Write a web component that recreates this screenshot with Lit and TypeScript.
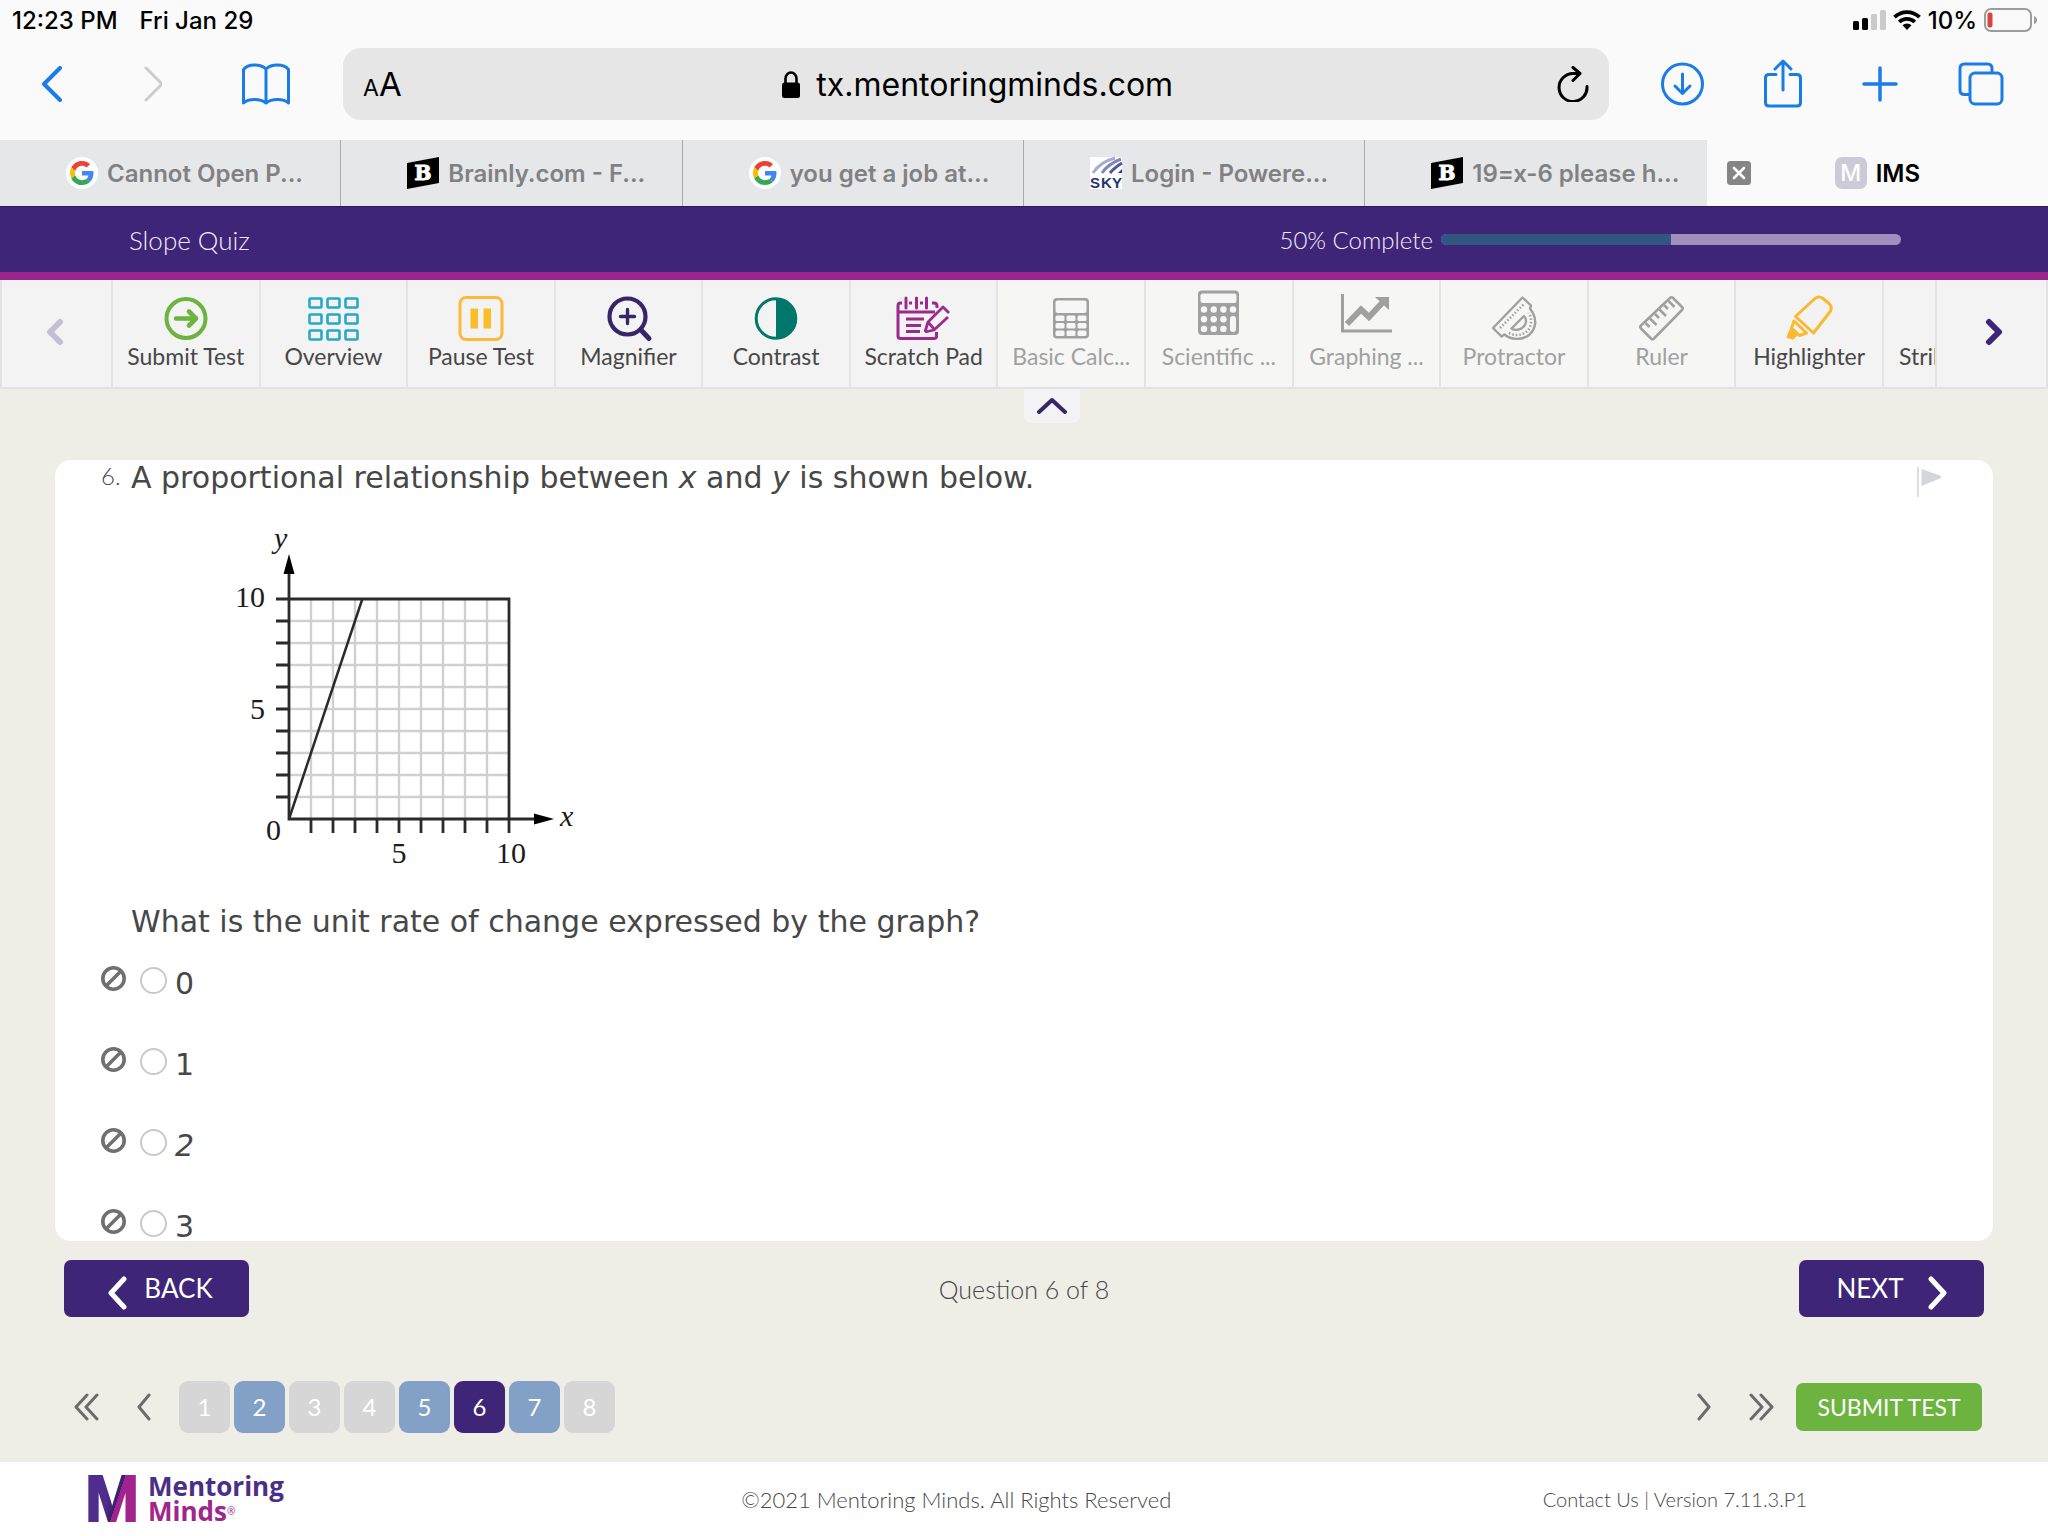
import { LitElement, html, svg, css, nothing } from "lit";
import { customElement, state } from "lit/decorators.js";
import { classMap } from "lit/directives/class-map.js";

const UNIT = 22;
const steps = Array.from({ length: 9 }, (_, i) => i + 1);

const chevron = (d: string, w: number, h: number, stroke: number) => html`<svg
  width=${w} height=${h} viewBox="0 0 ${w} ${h}" fill="none" stroke="currentColor"
  stroke-width=${stroke} stroke-linecap="round" stroke-linejoin="round" aria-hidden="true"><path d=${d}></path></svg>`;

const googleIcon = html`<svg width="32" height="32" viewBox="0 0 32 32" aria-hidden="true">
  <circle cx="16" cy="16" r="16" fill="#fff"></circle>
  <g transform="translate(4 4) scale(.5)">
    <path fill="#EA4335" d="M24 9.5c3.54 0 6.71 1.22 9.21 3.6l6.85-6.85C35.9 2.38 30.47 0 24 0 14.62 0 6.51 5.38 2.56 13.22l7.98 6.19C12.43 13.72 17.74 9.5 24 9.5z"></path>
    <path fill="#4285F4" d="M46.98 24.55c0-1.57-.15-3.09-.38-4.55H24v9.02h12.94c-.58 2.96-2.26 5.48-4.78 7.18l7.73 6c4.51-4.18 7.09-10.36 7.09-17.65z"></path>
    <path fill="#FBBC05" d="M10.53 28.59c-.48-1.45-.76-2.99-.76-4.59s.27-3.14.76-4.59l-7.98-6.19C.92 16.46 0 20.12 0 24c0 3.88.92 7.54 2.56 10.78l7.97-6.19z"></path>
    <path fill="#34A853" d="M24 48c6.48 0 11.93-2.13 15.89-5.81l-7.73-6c-2.15 1.45-4.92 2.3-8.16 2.3-6.26 0-11.57-4.22-13.47-9.91l-7.98 6.19C6.51 42.62 14.62 48 24 48z"></path>
  </g></svg>`;

const brainlyIcon = html`<svg width="32" height="32" viewBox="0 0 32 32" aria-hidden="true">
  <path d="M0 6 32 0V26L0 32z" fill="#000"></path>
  <text x="16" y="23" text-anchor="middle" font-family="DejaVu Serif, serif" font-weight="700" font-size="20" fill="#fff" stroke="#fff">B</text></svg>`;

const skyIcon = html`<svg width="32" height="32" viewBox="0 0 32 32" overflow="visible" aria-hidden="true">
  <path fill="#fff" d="M0 0h32v32H0z"></path>
  <path d="M3 16Q10 5 25 1" stroke="#a9abd0" stroke-width="3" fill="none"></path>
  <path d="M12 16Q18 7 31 2" stroke="#8287bd" stroke-width="3" fill="none"></path>
  <path d="M20 16Q24 11 32 6" stroke="#4d58a3" stroke-width="3" fill="none"></path>
  <path d="M28 16 32 12V16z" fill="#2d3a85"></path>
  <text x="0 11 22" y="31" font-family="Liberation Sans, sans-serif" font-weight="700" font-size="15" fill="#25356f">SKY</text></svg>`;

const toolSvg = (body: unknown) => html`<svg class="tool-icon" width="56" height="50" viewBox="0 0 56 50" fill="none" aria-hidden="true">${body}</svg>`;

const icons: Record<string, unknown> = {
  submit: svg`<circle cx="28" cy="28.5" r="19.5" stroke="#6cb33f" stroke-width="4"/>
    <path d="M18 28.5H38M31 21.5l7 7-7 7" stroke="#6cb33f" stroke-width="4.6" stroke-linecap="round" stroke-linejoin="round"/>`,
  overview: svg`${[0, 1, 2].map((r) => [0, 1, 2].map((c) => svg`<rect x=${4.5 + c * 18} y=${8.5 + r * 16} width="12" height="9" rx="1" stroke="#27a9c4" stroke-width="2.6"/>`))}`,
  pause: svg`<rect x="7" y="7.500" width="42" height="42" rx="6" stroke="#fbba3b" stroke-width="3"/>
    <path d="M17.500 18.500h7.500v20h-7.500zM30.500 18.500h7.500v20h-7.500z" fill="#fbbd28"/>`,
  magnifier: svg`<circle cx="26.500" cy="26.500" r="18" stroke="#3a2468" stroke-width="4.200"/>
    <path d="M40 40l8 8.500" stroke="#3a2468" stroke-width="5" stroke-linecap="round"/>
    <path d="M26.500 19.500v14M19.500 26.500h14" stroke="#3a2468" stroke-width="3.400" stroke-linecap="round"/>`,
  contrast: svg`<circle cx="28" cy="28.500" r="19.800" stroke="#00776a" stroke-width="3"/><path d="M28 8.700a19.800 19.800 0 0 1 0 39.600z" fill="#00776a"/>`,
  scratch: svg`<g stroke="#9c2a8c" stroke-width="3">
    <path d="M6 13H4.500Q2 13 2 15.500V46Q2 48.500 4.500 48.500H38Q40.500 48.500 40.500 46V42M2 22h37M36 13h2Q41 13 41 16v2M13 13h3M24 13h3"/>
    <path d="M10 8v10M20.500 8v10M30.500 8v10" stroke-linecap="round"/>
    <path d="M10 29h18M10 35.500h15M10 41.500h14"/>
    <path d="M29 42l3-10L47 17l6 6M52 27 38 40l-9 2M47 17l6 6M32 32l6 7" stroke-linejoin="round" stroke-width="2.800"/></g>`,
  basic: svg`<rect x="10" y="8" width="36" height="40.500" rx="4" fill="#a0a0a0"/>
    <rect x="12.500" y="10.500" width="31" height="12.500" rx="2" fill="#f6f6f6"/>
    ${[0, 1, 2].map((r) => [0, 1, 2].map((c) => svg`<rect x=${12.5 + c * 11} y=${25.5 + r * 7.5} width="9" height="5.500" rx="1.500" fill="#f6f6f6"/>`))}`,
  scientific: svg`<rect x="7" y="0.500" width="41" height="44.500" rx="4" fill="#a0a0a0"/>
    <rect x="9.500" y="3.500" width="36" height="9.500" rx="2" fill="#f6f6f6"/>
    ${[0, 1, 2].map((r) => [0, 1, 2].map((c) => svg`<circle cx=${13 + c * 9.7} cy=${19.5 + r * 9.7} r="3.200" fill="#f6f6f6"/>`))}
    <circle cx="42" cy="19.500" r="3.200" fill="#f6f6f6"/><rect x="39" y="26" width="6" height="16" rx="3" fill="#f6f6f6"/>`,
  graphing: svg`<path d="M4.500 4v37H54" stroke="#a0a0a0" stroke-width="3"/>
    <path d="M9 34 23 19.500l8 7.500L45 12" stroke="#a0a0a0" stroke-width="6"/><path d="M37 7h14v13z" fill="#a0a0a0"/>`,
  protractor: svg`<g stroke="#a0a0a0" stroke-width="2.400" stroke-linejoin="round">
    <path d="M7 38 36.500 7.500 45 15.500 44 18.500C52 29 50 39 43 45 36 50.500 25 50 18.500 44.500L15.500 46.500z"/>
    <path d="M25.500 38.500 38 26C41 29 40.500 34 37.500 36.800 34.500 40 29 41 25.500 38.500z"/>
    <path d="M14 38 38 14M23 43C31 47 40 44.500 43.500 38 46 33 45.500 27 42.500 23" stroke-width="2.600" stroke-dasharray="1.500 2"/></g>`,
  ruler: svg`<g stroke="#a0a0a0" stroke-width="2.500" stroke-linejoin="round">
    <path d="M7 35.500 36 8Q37.500 6.500 39 8L48 17Q49.500 18.500 48 20L20 48.500Q18.500 50 17 48.500L7 38.500Q5.500 37 7 35.500z"/>
    <path d="M11.500 33l4 4M16 28.500l6.500 6.500M21 24l4 4M25.500 19.500l6.500 6.500M30 15l4 4M34.500 11l6 6"/></g>`,
  highlighter: svg`<g stroke="#fbb831" stroke-width="3" stroke-linejoin="round">
    <path d="M14.500 26.500 34 8.500Q38 5.500 42 8.500L48 13.500Q51.500 17 49.500 21L32.500 43z"/>
    <path d="M13 31l-2.500 7 8 7.500 7-2.500z"/><path d="M10 39 6.500 47l5.500 1.500 4-4z" fill="#fbb831" stroke-width="2"/></g>`,
  strike: svg`<path d="M6 27h44" stroke="#3a2468" stroke-width="3"/>`,
};

const tools: { icon: string; label: string; off?: boolean }[] = [
  { icon: "submit", label: "Submit Test" },
  { icon: "overview", label: "Overview" },
  { icon: "pause", label: "Pause Test" },
  { icon: "magnifier", label: "Magnifier" },
  { icon: "contrast", label: "Contrast" },
  { icon: "scratch", label: "Scratch Pad" },
  { icon: "basic", label: "Basic Calc...", off: true },
  { icon: "scientific", label: "Scientific ...", off: true },
  { icon: "graphing", label: "Graphing ...", off: true },
  { icon: "protractor", label: "Protractor", off: true },
  { icon: "ruler", label: "Ruler", off: true },
  { icon: "highlighter", label: "Highlighter" },
  { icon: "strike", label: "Strikethro..." },
];

@customElement("browser-chrome")
class BrowserChrome extends LitElement {
  static styles = css`
    :host { display: block; background: #fafafa; color: #000; font-family: Inter, "Liberation Sans", sans-serif; }
    button { border: 0; padding: 0; background: none; color: inherit; font: inherit; display: flex; }
    svg { display: block; flex: none; }
    .status { display: flex; align-items: center; height: 40px; padding: 0 10px 0 12px; font-size: 24px; font-weight: 500; }
    .date { margin-left: 22px; flex: 1; }
    .signals { display: flex; align-items: center; gap: 7px; }
    .bar { display: flex; align-items: center; height: 100px; box-sizing: border-box; padding: 0 44px 12px 42px; }
    .nav { display: flex; align-items: center; gap: 80px; color: #1a7ce8; }
    .forward { color: #cccccc; }
    .address { flex: 1; height: 72px; box-sizing: border-box; margin: 0 52px 0 53px; padding: 0 20px; border-radius: 18px; background: #e6e6e6; display: flex; align-items: center; }
    .size { align-items: baseline; line-height: 40px; padding-top: 4px; }
    .small { font-size: 23px; }
    .large { font-size: 33px; }
    .site { flex: 1; display: flex; justify-content: center; align-items: center; gap: 16px; }
    .site input { width: 360px; padding: 0; border: 0; background: none; font: inherit; font-size: 32px; color: #000; }
    .actions { display: flex; align-items: center; gap: 60px; color: #1a7ce8; }
    .tabs { display: grid; grid-template-columns: repeat(6, 1fr); height: 66px; background: #e6e7e9; }
    .tab { display: flex; align-items: center; gap: 9px; padding-left: 66px; border-right: 1px solid #a9a9ab; color: #818184; font-size: 24px; font-weight: 600; text-decoration: none; white-space: nowrap; }
    .tab:nth-child(5) { border-right: 0; }
    .current { display: flex; align-items: center; padding: 0 44px 0 20px; background: #fafafa; }
    .current .tab { flex: 1; justify-content: center; padding: 0; border: 0; color: #000; }
    .initial { width: 32px; height: 32px; border-radius: 7px; background: #cbcad6; color: #fff; display: grid; place-items: center; font-weight: 500; font-size: 23px; }
  `;
  render() {
    return html`
      <div class="status">
        <span>12:23 PM</span><span class="date">Fri Jan 29</span>
        <div class="signals">
          <svg width="33" height="20" viewBox="0 0 33 20" aria-hidden="true"><rect y="11" width="6" height="9" rx="1.5"/><rect x="9" y="8" width="6" height="12" rx="1.5"/><rect x="18" y="4" width="6" height="16" rx="1.5" fill="#cacaca"/><rect x="27" width="6" height="20" rx="1.5" fill="#cacaca"/></svg>
          <svg width="28" height="20" viewBox="0 0 28 20" fill="none" stroke="#000" stroke-width="3.8" aria-hidden="true"><path d="M1.500 7.200a18 18 0 0 1 25 0M6.200 12a11.200 11.200 0 0 1 15.600 0"/><path d="M14 20l-4.500-4.800a6.500 6.500 0 0 1 9 0z" fill="#000" stroke="none"/></svg>
          <span>10%</span>
          <svg width="54" height="24" viewBox="0 0 54 24" aria-hidden="true"><rect x="1" y="1" width="46" height="22" rx="6" fill="none" stroke="#9c9c9e" stroke-width="2"/><rect x="3.500" y="4.500" width="5" height="15" rx="2" fill="#d9453a"/><path d="M50 8q3 1 3 4t-3 4z" fill="#9c9c9e"/></svg>
        </div>
      </div>
      <div class="bar">
        <div class="nav">
          <button aria-label="Back">${chevron("M18 2 2 18l16 16", 20, 36, 4)}</button>
          <button class="forward" aria-label="Forward">${chevron("M4 2l16 16L4 34", 20, 36, 3)}</button>
          <button aria-label="Bookmarks"><svg width="48" height="42" viewBox="0 0 48 42" fill="none" stroke="currentColor" stroke-width="3" stroke-linejoin="round"><path d="M24 6Q20 2 12.500 2T1.500 6.500V40Q5 36.500 12.500 36.500T24 40Q28 36.500 35.500 36.500T46.500 40V6.500Q43 2 35.500 2T24 6V40"/></svg></button>
        </div>
        <div class="address">
          <button class="size" aria-label="Page text size"><span class="small">A</span><span class="large">A</span></button>
          <div class="site">
            <svg width="18" height="27" viewBox="0 0 18 27" aria-hidden="true"><rect y="11.500" width="18" height="15.500" rx="2.500"/><path d="M3.500 12V7.500a5.500 6 0 0 1 11 0V12" fill="none" stroke="#000" stroke-width="2.600"/></svg>
            <input type="text" aria-label="Address" value="tx.mentoringminds.com">
          </div>
          <button aria-label="Reload"><svg width="32" height="36" viewBox="0 0 32 36" fill="none" stroke="currentColor" stroke-width="3" stroke-linecap="round" stroke-linejoin="round"><path d="M30 20.500A14 14 0 1 1 16 7.500h6M16 1.500l7 6-7 7"/></svg></button>
        </div>
        <div class="actions">
          <button aria-label="Downloads"><svg width="43" height="44" viewBox="0 0 43 44" fill="none" stroke="currentColor" stroke-width="3" stroke-linecap="round" stroke-linejoin="round"><circle cx="21.500" cy="22" r="20"/><path d="M21.500 12v19M14 24l7.500 7.500L29 24"/></svg></button>
          <button aria-label="Share"><svg width="38" height="50" viewBox="0 0 38 50" fill="none" stroke="currentColor" stroke-width="3" stroke-linecap="round" stroke-linejoin="round"><path d="M12 15.500H5Q1.500 15.500 1.500 19V43.500Q1.500 47 5 47H33Q36.500 47 36.500 43.500V19Q36.500 15.500 33 15.500H26M19 31V2M11 10l8-8 8 8"/></svg></button>
          <button aria-label="New tab"><svg width="36" height="36" viewBox="0 0 36 36" fill="none" stroke="currentColor" stroke-width="3.500" stroke-linecap="round"><path d="M18 2v32M2 18h32"/></svg></button>
          <button aria-label="All tabs"><svg width="46" height="44" viewBox="0 0 46 44" fill="none" stroke="currentColor" stroke-width="3"><rect x="12" y="11" width="32" height="31" rx="5"/><path d="M34 11V6.500Q34 2 29.500 2H6.500Q2 2 2 6.500V28Q2 32.500 6.500 32.500H12"/></svg></button>
        </div>
      </div>
      <nav class="tabs" aria-label="Open pages">
        <a class="tab" href="#">${googleIcon}Cannot Open P...</a>
        <a class="tab" href="#">${brainlyIcon}Brainly.com - F...</a>
        <a class="tab" href="#">${googleIcon}you get a job at...</a>
        <a class="tab" href="#">${skyIcon}Login - Powere...</a>
        <a class="tab" href="#">${brainlyIcon}19=x-6 please h...</a>
        <div class="current">
          <button aria-label="Close tab"><svg width="24" height="24" viewBox="0 0 24 24"><rect width="24" height="24" rx="3.500" fill="#858585"/><path d="M7 7l10 10M17 7 7 17" stroke="#fff" stroke-width="2.600" stroke-linecap="round"/></svg></button>
          <a class="tab" href="#"><span class="initial">M</span>IMS</a>
        </div>
      </nav>`;
  }
}

@customElement("quiz-toolbar")
class QuizToolbar extends LitElement {
  static styles = css`
    :host { display: block; font-family: Lato, "Open Sans", sans-serif; }
    .head { display: flex; align-items: center; height: 66px; box-sizing: border-box; padding: 0 147px 0 129px; background: #3f2577; border-top: 1px solid #2b1a55; color: #f2ecfa; font-size: 24px; font-weight: 300; }
    .title { flex: 1; font-size: 26px; font-weight: 300; margin: 0; }
    .meter { width: 460px; height: 11px; margin-left: 8px; border-radius: 6px; overflow: hidden; background: #a18fbd; }
    .done { height: 100%; background: #31567f; }
    .strip { display: flex; box-sizing: border-box; height: 117px; border-top: 8px solid #9b258c; background: #f3f3f3; }
    button { font: inherit; color: #474747; background: none; border: 0; padding: 0; }
    .page { flex: none; width: 113px; box-sizing: border-box; display: grid; place-items: center; border: solid #e2e2e6; border-width: 0 2px 2px 2px; padding: 0 0 4px 4px; color: #3f2577; }
    .page:disabled { padding: 0 4px 4px 0; color: #c5bfd6; }
    .tools { flex: 1; min-width: 0; display: flex; overflow: hidden; border-bottom: 2px solid #e2e2e6; }
    .tool { flex: 0 0 8.1%; box-sizing: border-box; border-right: 2px solid #e4e4e6; display: flex; flex-direction: column; align-items: center; gap: 1px; padding-top: 10px; font-size: 23px; line-height: 30px; white-space: nowrap; }
    .tool:disabled { color: #a0a0a0; background: #f6f6f5; }
    .tool-icon { display: block; flex: none; overflow: visible; }
  `;
  render() {
    return html`
      <div class="head">
        <h1 class="title">Slope Quiz</h1>
        <span>50% Complete</span>
        <div class="meter" role="progressbar" aria-valuenow="50" aria-label="Quiz progress"><div class="done" style="width:50%"></div></div>
      </div>
      <div class="strip">
        <button class="page" disabled aria-label="Previous tools">${chevron("M14 4 4 14l10 10", 18, 28, 6)}</button>
        <div class="tools">
          ${tools.map((t) => html`<button class="tool" ?disabled=${t.off ?? false}>${toolSvg(icons[t.icon])}<span>${t.label}</span></button>`)}
        </div>
        <button class="page" aria-label="More tools">${chevron("M4 4l10 10L4 24", 18, 28, 6)}</button>
      </div>`;
  }
}

@customElement("line-graph")
class LineGraph extends LitElement {
  static styles = css`
    :host { display: block; }
    svg { display: block; }
    .num { font: 30px "Liberation Serif", serif; fill: #1c1c1c; }
    .axis { font: italic 30px "Liberation Serif", serif; fill: #1c1c1c; }
  `;
  render() {
    const x0 = 59, y0 = 293, end = UNIT * 10;
    return html`<svg width="350" height="345" viewBox="0 0 350 345" role="img" aria-label="Line through the origin rising 3 units for each unit of x">
      <g stroke="#d0d0d0" stroke-width="2.400">${steps.map((i) => svg`<path d="M${x0 + i * UNIT} ${y0}V${y0 - end}M${x0} ${y0 - i * UNIT}H${x0 + end}"/>`)}</g>
      <g stroke="#2b2b2b" stroke-width="2.800">
        ${[...steps, 10].map((i) => svg`<path d="M${x0 + i * UNIT} ${y0}v14M${x0} ${y0 - i * UNIT}h-13"/>`)}
        <path fill="none" d="M${x0} 45V${y0}H308M${x0} ${y0 - end}H${x0 + end}V${y0}"/>
        <path d="M${x0} ${y0}L${x0 + end / 3} ${y0 - end}" stroke-width="2.500"/>
      </g>
      <path d="M59 28l5.500 20h-11zM324 293l-20 5.500v-11z"/>
      <text class="axis" x="44" y="22">y</text><text class="axis" x="330" y="300">x</text>
      <g class="num" text-anchor="end"><text x="35" y="81">10</text><text x="35" y="193">5</text><text x="51" y="314">0</text></g>
      <g class="num" text-anchor="middle"><text x="169" y="337">5</text><text x="281" y="337">10</text></g>
    </svg>`;
  }
}

@customElement("app-root")
class AppRoot extends LitElement {
  static styles = css`
    :host { display: flex; flex-direction: column; height: 100vh; background: #eeede6; color: #474747; font-family: Lato, "Open Sans", sans-serif; }
    button { font: inherit; color: inherit; background: none; border: 0; padding: 0; }
    svg { display: block; flex: none; }
    main { flex: 1; min-height: 0; display: flex; flex-direction: column; }
    .collapse { margin-left: 50%; width: 56px; height: 34px; display: grid; place-items: center; border-radius: 0 0 6px 6px; background: #f3f2f4; color: #3a2468; }
    .card { flex: 1; min-height: 0; overflow: hidden; margin: 37px 55px 0 55px; padding: 0 51px 0 46px; border-radius: 16px; background: #fff; font: 30px/36px Verdana, "DejaVu Sans", sans-serif; }
    .question { display: grid; grid-template-columns: 30px 1fr 25px; }
    .number { font: 300 24px/32px Lato, sans-serif; }
    .stem p { margin: 0; }
    .flag { margin-top: 7px; align-self: start; }
    .graph { margin: 30px 0 33px 99px; }
    .options { list-style: none; margin: 26px 0 0; padding: 0; display: grid; gap: 45px; }
    .option { display: flex; align-items: flex-start; height: 36px; }
    .option input { appearance: none; box-sizing: border-box; width: 27px; height: 27px; margin: 1px 8px 0 14px; border: 2px solid #c9c9c9; border-radius: 50%; background: #fff; }
    .option input:checked { background: #3f2577; }
    .move { display: grid; grid-template-columns: 1fr auto 1fr; align-items: center; margin: 19px 64px 0; font-size: 25px; line-height: 28px; font-weight: 300; }
    .step { display: flex; align-items: center; justify-content: center; gap: 17px; width: 185px; height: 57px; padding: 0 0 2px 8px; border-radius: 7px; background: #3f2577; color: #fff; font-size: 26px; font-weight: 400; }
    .step svg { margin-top: 10px; }
    .next { justify-self: end; gap: 24px; padding-left: 0; }
    .pager { display: flex; align-items: center; margin: 64px 66px 29px 74px; color: #6b6b6b; }
    .far { margin-right: 38px; }
    .near { margin-right: 28px; }
    .pages { flex: 1; display: flex; gap: 4px; }
    .tile { width: 51px; height: 52px; padding-bottom: 2px; border-radius: 9px; background: #d6d6d6; color: #fff; font-size: 24px; }
    .answered { background: #83a1c6; }
    .active { background: #3f2577; }
    .submit { width: 186px; height: 48px; margin-left: 22px; border-radius: 7px; background: #6cb33f; color: #fff; font-size: 23px; }
    footer { display: grid; grid-template-columns: 38% 1fr auto; align-items: center; height: 74px; padding: 0 241px 0 88px; background: #fff; font-size: 22px; font-weight: 300; }
    footer a { color: inherit; text-decoration: none; }
    .contact { font-size: 20px; }
    .brand { display: flex; align-items: center; gap: 10px; font: 700 26px/25px "Open Sans", sans-serif; }
    .mentoring { color: #4b2e87; display: block; }
    .minds { color: #a0268c; display: block; }
    .mark { font-size: 10px; line-height: 10px; vertical-align: 6px; font-weight: 400; }
  `;
  @state() private choice = "";
  @state() private page = 6;

  private option(value: string, italic = false) {
    const id = `choice-${value}`;
    return html`<li class="option">
      <button aria-label="Eliminate choice ${value}"><svg width="25" height="25" viewBox="0 0 25 25" fill="none" stroke="#707070" stroke-width="3.600"><circle cx="12.500" cy="12.500" r="10.700"/><path d="M5 20 20 5"/></svg></button>
      <input type="radio" name="choice" id=${id} .checked=${this.choice === value} @change=${() => (this.choice = value)}>
      <label for=${id}>${italic ? html`<i>${value}</i>` : value}</label>
    </li>`;
  }

  render() {
    const answered = [2, 5, 7];
    return html`
      <browser-chrome></browser-chrome>
      <quiz-toolbar></quiz-toolbar>
      <main>
        <button class="collapse" aria-label="Hide toolbar">${chevron("M2 15 15 3l13 12", 30, 18, 4)}</button>
        <section class="card">
          <div class="question">
            <span class="number">6.</span>
            <div class="stem">
              <p>A proportional relationship between <i>x</i> and <i>y</i> is shown below.</p>
              <line-graph class="graph"></line-graph>
              <p>What is the unit rate of change expressed by the graph?</p>
            </div>
            <button class="flag" aria-label="Flag question"><svg width="25" height="31" viewBox="0 0 25 31"><path d="M0 0h2v30H0z" fill="#dcdde6"/><path d="M4.500 2 23 8.500Q25 10 23 11.500L4.500 19z" fill="#d3d6df"/></svg></button>
          </div>
          <ul class="options">${this.option("0")}${this.option("1")}${this.option("2", true)}${this.option("3")}</ul>
        </section>
        <div class="move">
          <button class="step">${chevron("M16 3 3 17l13 14", 19, 34, 5)}BACK</button>
          <span>Question 6 of 8</span>
          <button class="step next">NEXT${chevron("M3 3l13 14L3 31", 19, 34, 5)}</button>
        </div>
        <nav class="pager" aria-label="Questions">
          <button class="far" aria-label="First">${chevron("M13 2 2 14l11 12M23 2 12 14l11 12", 25, 28, 3)}</button>
          <button class="near" aria-label="Previous">${chevron("M12 2 2 14l10 12", 14, 28, 3)}</button>
          <div class="pages">
            ${[1, 2, 3, 4, 5, 6, 7, 8].map((n) => html`<button
              class=${classMap({ tile: true, answered: answered.includes(n), active: n === this.page })}
              aria-current=${n === this.page ? "page" : nothing}
              @click=${() => (this.page = n)}>${n}</button>`)}
          </div>
          <button class="far" aria-label="Next">${chevron("M2 2l10 12L2 26", 14, 28, 3)}</button>
          <button aria-label="Last">${chevron("M2 2l11 12L2 26M12 2l11 12-11 12", 25, 28, 3)}</button>
          <button class="submit">SUBMIT TEST</button>
        </nav>
      </main>
      <footer>
        <div class="brand">
          <svg width="50" height="46" viewBox="0 0 50 46" overflow="visible" aria-hidden="true">
            <defs><linearGradient id="duo" gradientUnits="userSpaceOnUse" x1="20" y1="19.900" x2="39" y2="26.100">
              <stop offset="0" stop-color="#4f2d8c"/><stop offset=".5" stop-color="#3a1f6e"/><stop offset=".5" stop-color="#a1238e"/></linearGradient></defs>
            <text x="-3" y="45" font-family="Liberation Sans, sans-serif" font-weight="700" font-size="65" fill="url(#duo)" stroke="url(#duo)" stroke-width="2">M</text>
          </svg>
          <div><span class="mentoring">Mentoring</span><span class="minds">Minds<span class="mark">®</span></span></div>
        </div>
        <span>©2021 Mentoring Minds. All Rights Reserved</span>
        <span class="contact"><a href="#">Contact Us</a> | Version 7.11.3.P1</span>
      </footer>`;
  }
}
